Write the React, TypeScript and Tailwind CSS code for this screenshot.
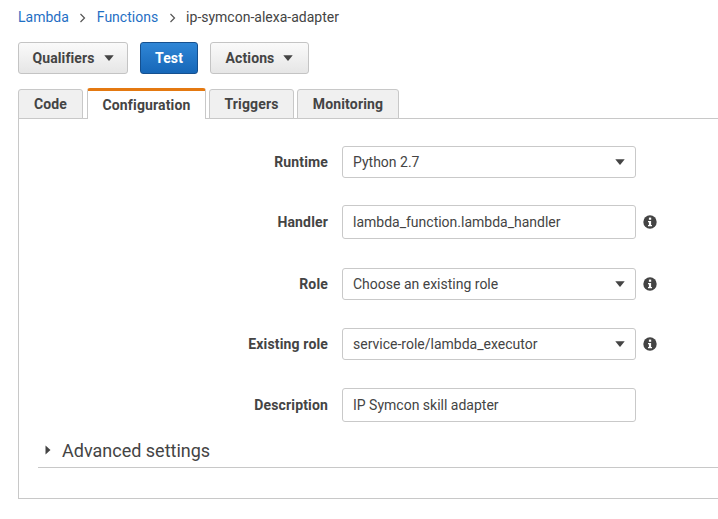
const ff = "font-['Roboto',sans-serif]";

function Caret() {
  return (
    <svg width="10" height="6" viewBox="0 0 10 6">
      <path d="M0.3 0.3H9.7L5.5 5.4Q5 5.9 4.5 5.4Z" fill="#444" />
    </svg>
  );
}

function Chevron() {
  return (
    <svg width="7" height="10" viewBox="0 0 7 10" className="mx-[10.5px]">
      <path d="M1.5 1L5.5 5L1.5 9" fill="none" stroke="#555" strokeWidth="1.2" />
    </svg>
  );
}

function Info() {
  return (
    <svg width="14" height="14" viewBox="0 0 14 14" className="ml-[7px] shrink-0">
      <circle cx="7" cy="7" r="6.7" fill="#444" />
      <rect x="5.9" y="2.6" width="2.3" height="2.2" fill="#fff" />
      <path d="M5 6H8.1V10.1H9V11.3H5V10.1H5.9V7.2H5Z" fill="#fff" />
    </svg>
  );
}

function ToolButton({ label, width }: { label: string; width: string }) {
  return (
    <button className={`${width} h-[32px] flex items-center justify-center gap-[9px] rounded-[3px] border border-[#c4c4c4] bg-gradient-to-b from-[#fafafa] to-[#e6e6e6] text-[14px] font-bold tracking-[0.1px] text-[#444]`}>
      {label}
      <Caret />
    </button>
  );
}

function Tab({ label, width, active }: { label: string; width: string; active?: boolean }) {
  return active ? (
    <div className={`${width} relative z-10 h-[31px] flex items-center justify-center rounded-t-[3px] border-x border-[#c8c8c8] border-t-[3px] border-t-[#e47911] bg-white text-[14px] font-bold tracking-[0.15px] text-[#444]`}>
      {label}
    </div>
  ) : (
    <div className={`${width} mt-[1px] h-[30px] flex items-center justify-center rounded-t-[3px] border border-[#c8c8c8] bg-[#f0f0f0] text-[14px] font-bold tracking-[0.15px] text-[#444]`}>
      {label}
    </div>
  );
}

function Field({ label, value, select, info, height, mt }: { label: string; value: string; select?: boolean; info?: boolean; height: string; mt: string }) {
  return (
    <div className={`${mt} flex items-center`}>
      <div className="w-[309px] text-right text-[14px] font-bold tracking-[0.15px] text-[#444]">{label}</div>
      <div className={`${height} ml-[14px] w-[294px] flex items-center justify-between rounded-[3px] border border-[#c9c9c9] bg-white pl-[10px] pr-[10px] text-[14px] text-[#444]`}>
        <span>{value}</span>
        {select && <Caret />}
      </div>
      {info && <Info />}
    </div>
  );
}

export default function App() {
  return (
    <div className={`${ff} h-[519px] w-[718px] overflow-hidden bg-white pl-[18px] pt-[9px]`}>
      <div className="flex h-[17px] items-center text-[14px] text-[#444]">
        <span className="text-[#1f6fc4]">Lambda</span>
        <Chevron />
        <span className="text-[#1f6fc4]">Functions</span>
        <Chevron />
        <span>ip-symcon-alexa-adapter</span>
      </div>
      <div className="mt-[16px] flex gap-[12px]">
        <ToolButton label="Qualifiers" width="w-[110px]" />
        <button className="h-[32px] w-[58px] rounded-[3px] border border-[#15508f] bg-gradient-to-b from-[#2f86d6] to-[#1667b8] text-[14px] font-bold tracking-[0.1px] text-white">Test</button>
        <ToolButton label="Actions" width="w-[99px]" />
      </div>
      <div className="mt-[14px] flex items-start">
        <Tab label="Code" width="w-[65px]" />
        <div className="w-[4px]" />
        <Tab label="Configuration" width="w-[119px]" active />
        <div className="w-[3px]" />
        <Tab label="Triggers" width="w-[85px]" />
        <div className="w-[3px]" />
        <Tab label="Monitoring" width="w-[102px]" />
      </div>
      <div className="-mt-[1px] h-[381px] w-[720px] border-b border-l border-t border-[#c8c8c8] pt-[27px]">
        <Field label="Runtime" value="Python 2.7" select height="h-[32px]" mt="mt-0" />
        <Field label="Handler" value="lambda_function.lambda_handler" info height="h-[34px]" mt="mt-[27px]" />
        <Field label="Role" value="Choose an existing role" select info height="h-[32px]" mt="mt-[29px]" />
        <Field label="Existing role" value="service-role/lambda_executor" select info height="h-[32px]" mt="mt-[28px]" />
        <Field label="Description" value="IP Symcon skill adapter" height="h-[34px]" mt="mt-[28px]" />
        <div className="ml-[19px] mt-[16px] flex h-[30px] w-[700px] items-center border-b border-[#c8c8c8] pb-[5px] text-[18px] text-[#444]">
          <svg width="6" height="10" viewBox="0 0 6 10" className="ml-[7px] mr-[11px]">
            <path d="M0.5 0.5L5.5 5L0.5 9.5Z" fill="#444" />
          </svg>
          Advanced settings
        </div>
      </div>
    </div>
  );
}
